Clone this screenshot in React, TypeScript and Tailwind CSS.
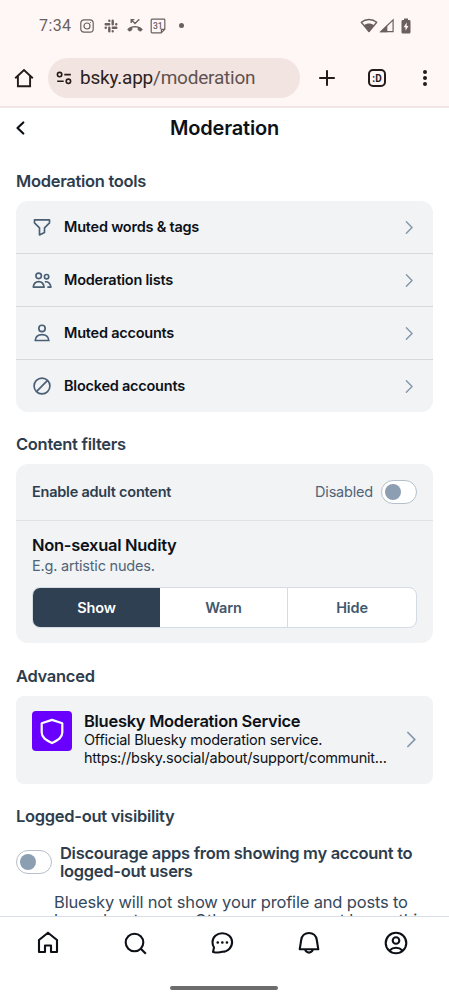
import type { ReactNode } from 'react'

const ink = { fill: 'none', stroke: 'currentColor' }

function Chevron({ size }: { size: number }) {
  return (
    <svg width={size} height={size} viewBox="0 0 24 24" fill="#8597a9">
      <path d="M8.293 3.293a1 1 0 0 1 1.414 0l8 8a1 1 0 0 1 0 1.414l-8 8a1 1 0 0 1-1.414-1.414L15.586 12 8.293 4.707a1 1 0 0 1 0-1.414Z" />
    </svg>
  )
}

function StatusBar() {
  return (
    <div className="flex h-[57px] shrink-0 items-start pl-[39px] pr-[38px] pt-[15px] text-[#6b605f]">
      <div className="flex h-[21px] w-full items-center">
        <span className="w-[41px] whitespace-nowrap font-[Roboto] text-[16px] tracking-[0.4px]">7:34</span>
        {/* instagram */}
        <svg width="14" height="14" viewBox="0 0 14 14" {...ink} strokeWidth="1.2">
          <rect x="0.8" y="0.8" width="12.4" height="12.4" rx="3.2" />
          <circle cx="7" cy="7" r="3" />
          <circle cx="10.5" cy="3.6" r="0.5" fill="currentColor" stroke="none" />
        </svg>
        {/* slack */}
        <svg className="ml-[10px]" width="14" height="14" viewBox="0 0 14 14" {...ink} strokeWidth="2.4" strokeLinecap="round">
          <path d="M5.3 1.7v.1M1.7 5.3h3.5M8.7 1.7v3.5M12.3 5.3h-.1M1.7 8.7h.1M5.3 8.8v3.5M12.3 8.7H8.800M8.7 12.3v-.1" />
        </svg>
        {/* missed call */}
        <svg className="ml-[9px]" width="16" height="15" viewBox="0 0 16 15" fill="currentColor">
          <path d="M8 8.1c-2.8 0-5.3 1-7.4 2.8-.4.4-.4.7 0 1.1l1.4 1.3c.3.3.7.3 1 .1.7-.6 1.3-.9 1.9-1.2.3-.2.4-.4.4-.7V9.8c.9-.3 1.8-.4 2.7-.4s1.8.1 2.7.4v1.7c0 .3.1.5.4.7.6.3 1.2.6 1.9 1.2.3.2.7.2 1-.1l1.4-1.3c.4-.4.4-.7 0-1.1C13.3 9.1 10.8 8.1 8 8.1Z" />
          <path d="M4.2 4.900V1.7h3.2M4.4 1.900l3.600 3.600 4.300-4.300" {...ink} strokeWidth="1.3" />
        </svg>
        {/* calendar */}
        <svg className="ml-[7px]" width="16" height="16" viewBox="0 0 16 16" {...ink} strokeWidth="1.2">
          <path d="M2 1.2h12a.8.8 0 0 1 .8.8v9.2L11.2 14.8H2a.8.8 0 0 1-.8-.8V2a.8.8 0 0 1 .8-.8ZM14.6 11.4h-3.2v3.2" />
          <text x="7.8" y="10.8" textAnchor="middle" fill="currentColor" stroke="none" className="font-[Roboto] text-[8.5px] font-medium">31</text>
        </svg>
        <span className="ml-[13px] size-[5px] rounded-full bg-current" />
        <div className="ml-auto flex items-center">
          <svg width="18" height="15" viewBox="0 0 18 15" fill="currentColor">
            <path d="M1.3 4.3C5.6.6 12.4.6 16.7 4.3L9 13.6Z" {...ink} strokeWidth="1.4" strokeLinejoin="round" />
            <path d="M3.9 7.3c3-2.4 7.2-2.4 10.2 0L9 14Z" />
          </svg>
          <svg className="ml-px" width="15" height="15" viewBox="0 0 15 15" fill="currentColor">
            <path d="M1.8 13.7 14.1 1.8v11.9Z" {...ink} strokeWidth="1.2" />
            <path d="M1 14.2 8.3 7v7.2Z" />
          </svg>
          <svg className="ml-[7px]" width="10" height="16" viewBox="0 0 10 16">
            <path d="M3 .5h4v1.6h1.2A1.3 1.3 0 0 1 9.5 3.4v10.8a1.3 1.3 0 0 1-1.3 1.3H1.8a1.3 1.3 0 0 1-1.3-1.3V3.4a1.3 1.3 0 0 1 1.3-1.3H3Z" fill="currentColor" />
            <path d="M5.7 4.6 2.6 9.2h1.9v3.5l3-4.6H5.7Z" fill="#fff7f5" />
          </svg>
        </div>
      </div>
    </div>
  )
}

function BrowserBar() {
  return (
    <div className="flex h-[51px] shrink-0 items-start border-b-2 border-[#f2e6e4] pl-[14px] pt-[1px] text-[#241b1a]">
      <div className="flex h-10 w-full items-center">
        <svg width="20" height="20" viewBox="0 0 20 20" {...ink} strokeWidth="1.9">
          <path d="M1.2 10.3 10 2l8.8 8.3M3.9 8v10.3h12.2V8" />
        </svg>
        <div className="ml-[14px] flex h-10 w-[252px] items-center rounded-full bg-[#f1e4e1] pl-[8px]">
          <svg width="16" height="14" viewBox="0 0 16 14" {...ink} strokeWidth="1.6">
            <circle cx="3.6" cy="3.6" r="2.2" />
            <path d="M8.3 3.6h6.5M1.2 10.3h6.5" />
            <circle cx="12.4" cy="10.3" r="2.2" />
          </svg>
          <span className="ml-2 whitespace-nowrap font-[Roboto] text-[19px] tracking-[-0.22px] text-[#2b2120]">
            bsky.app<span className="text-[#5f5250]">/moderation</span>
          </span>
        </div>
        <svg className="ml-[18px]" width="18" height="18" viewBox="0 0 18 18" {...ink} strokeWidth="2">
          <path d="M9 1.2v15.6M1.2 9h15.6" />
        </svg>
        <div className="ml-[32px] flex size-[18px] items-center justify-center rounded-[5px] border-2 border-current font-[Roboto] text-[10px] font-bold">
          :D
        </div>
        <div className="ml-[37px] flex flex-col gap-[2px]">
          <span className="size-1 rounded-full bg-current" />
          <span className="size-1 rounded-full bg-current" />
          <span className="size-1 rounded-full bg-current" />
        </div>
      </div>
    </div>
  )
}

const tools: { label: string; icon: ReactNode }[] = [
  {
    label: 'Muted words & tags',
    icon: <path d="M3 3.5h18v3.6L15 13v5.5L9 21.5V13L3 7.1Z" />,
  },
  {
    label: 'Moderation lists',
    icon: (
      <>
        <circle cx="8" cy="7" r="3.3" />
        <circle cx="17.5" cy="8" r="2.6" />
        <path d="M1.500 20.500c.5-4 3-6.500 6.500-6.500s6 2.500 6.500 6.500ZM15.5 14.200c4-.7 6.500 1.600 7.200 6.300h-4.300" />
      </>
    ),
  },
  {
    label: 'Muted accounts',
    icon: (
      <>
        <circle cx="12" cy="6.5" r="3.8" />
        <path d="M3.8 21c.5-4.5 3.8-7 8.2-7s7.7 2.5 8.2 7Z" />
      </>
    ),
  },
  {
    label: 'Blocked accounts',
    icon: (
      <>
        <circle cx="12" cy="12" r="9.5" />
        <path d="M5.3 18.7 18.7 5.3" />
      </>
    ),
  },
]

function SectionTitle({ children }: { children: ReactNode }) {
  return <h2 className="text-[16.5px] font-semibold leading-5 tracking-[-0.29px] text-[#2e3d4d]">{children}</h2>
}

function Toggle() {
  return (
    <span className="flex h-6 w-9 shrink-0 items-center rounded-full border border-[#b5c0cb] bg-white pl-[3px]">
      <span className="size-4 rounded-full bg-[#8c9eb2]" />
    </span>
  )
}

function ToolList() {
  return (
    <div className="mt-[10px] divide-y divide-[#d4d9de] overflow-hidden rounded-xl bg-[#f1f3f5]">
      {tools.map(({ label, icon }) => (
        <div key={label} className="flex h-[53px] items-center px-4 last:h-[52px]">
          <svg className="text-[#4a5f75]" width="20" height="20" viewBox="0 0 24 24" {...ink} strokeWidth="2" strokeLinejoin="round">
            {icon}
          </svg>
          <span className="ml-3 flex-1 text-[14.5px] font-semibold tracking-[-0.23px] text-[#0d1117]">{label}</span>
          <Chevron size={17} />
        </div>
      ))}
    </div>
  )
}

function ContentFilters() {
  return (
    <div className="mt-[10px] h-[179px] rounded-xl bg-[#f1f3f5]">
      <div className="flex h-[57px] items-center border-b border-[#dde2e7] px-4">
        <span className="flex-1 text-[14.5px] font-semibold tracking-[-0.23px] text-[#2e3d4d]">Enable adult content</span>
        <span className="mr-2 text-[14.5px] tracking-[-0.2px] text-[#506478]">Disabled</span>
        <Toggle />
      </div>
      <div className="px-4 pt-[13px]">
        <p className="text-[16.5px] font-semibold leading-[22px] tracking-[-0.29px] text-[#0d1117]">Non-sexual Nudity</p>
        <p className="text-[14.5px] leading-5 tracking-[-0.2px] text-[#506478]">E.g. artistic nudes.</p>
        <div className="mt-[11px] grid h-[41px] grid-cols-[127px_128px_1fr] overflow-hidden rounded-lg border border-[#d4dbe2] bg-white text-[14.5px] font-semibold tracking-[-0.15px] text-[#42576c]">
          <span className="flex items-center justify-center bg-[#2e4052] text-white">Show</span>
          <span className="flex items-center justify-center border-r border-[#d4dbe2]">Warn</span>
          <span className="flex items-center justify-center">Hide</span>
        </div>
      </div>
    </div>
  )
}

function ModerationService() {
  return (
    <div className="mt-[10px] flex h-[88px] rounded-lg bg-[#f1f3f5] px-4 pt-[15px] text-[#0d1117]">
      <div className="flex size-10 items-center justify-center rounded bg-[#6900ff]">
        <svg width="26" height="28" viewBox="0 0 26 28" {...ink} stroke="white" strokeWidth="2.2" strokeLinejoin="round">
          <path d="M13 2.9 23.3 6.3v9.2c0 4.8-3.8 7.3-10.3 10.6C6.5 22.8 2.7 20.3 2.7 15.5V6.3Z" />
        </svg>
      </div>
      <div className="ml-3 min-w-0 flex-1 whitespace-nowrap">
        <p className="text-[16.5px] font-semibold leading-5 tracking-[-0.29px]">Bluesky Moderation Service</p>
        <p className="text-[14.5px] leading-[18px] tracking-[-0.23px]">Official Bluesky moderation service.</p>
        <p className="text-[14.5px] leading-[18px] tracking-[-0.23px]">https://bsky.social/about/support/communit...</p>
      </div>
      <div className="-mr-1 flex h-[57px] items-center">
        <Chevron size={21} />
      </div>
    </div>
  )
}

const tabs: ReactNode[] = [
  <path d="M3 9 12 1.7 21 9v12h-6v-6.5H9V21H3Z" />,
  <>
    <circle cx="11.5" cy="11.5" r="8.8" />
    <path d="m17.8 17.8 5 5" />
  </>,
  <>
    <path d="M12.3 2.2c5.5 0 9.8 3.9 9.8 9.1s-4.300 9.5-9.8 9.5c-1.400.5-5.500 1-9.300.2l1-4.500c-1-1.500-1.500-3.100-1.500-5.200 0-5.200 4.300-9.100 9.800-9.100Z" />
    <path d="M7.7 11.5h.1M12.3 11.5h.1M16.9 11.5h.1" strokeWidth="2.6" strokeLinecap="round" />
  </>,
  <path d="M2.7 18.3 4.2 9C4.8 4.7 8 2 12 2s7.2 2.7 7.8 7l1.5 9.3ZM8 18.5c.8 2.1 2.1 3.1 4 3.1s3.2-1 4-3.1" />,
  <>
    <circle cx="12" cy="12" r="10.3" />
    <circle cx="12" cy="9.5" r="3.3" />
    <path d="M5.5 19.5c3.7-3.6 9.3-3.6 13 0" />
  </>,
]

function BottomNav() {
  return (
    <nav className="h-[84px] shrink-0 border-t border-[#d9dfe4] bg-white pl-[4px] pr-[10px] pt-[14px]">
      <div className="grid grid-cols-5 text-[#0d1117]">
        {tabs.map((icon, i) => (
          <span key={i} className="flex justify-center">
            <svg width="24" height="24" viewBox="0 0 24 24" {...ink} strokeWidth="2.1" strokeLinejoin="round">
              {icon}
            </svg>
          </span>
        ))}
      </div>
      <div className="ml-[166px] mt-[31px] h-1 w-[108px] rounded-full bg-[#6c6c6c]" />
    </nav>
  )
}

export default function App() {
  return (
    <div className="flex h-[1000px] w-[449px] flex-col overflow-hidden bg-white font-[Inter,sans-serif]">
      <div className="flex shrink-0 flex-col bg-[#fff7f5]">
        <StatusBar />
        <BrowserBar />
      </div>

      <header className="grid h-10 shrink-0 grid-cols-[24px_1fr_24px] items-center px-2">
        <svg className="ml-[6px] text-[#0d1117]" width="12" height="16" viewBox="0 0 12 16" {...ink} strokeWidth="2.2" strokeLinecap="round" strokeLinejoin="round">
          <path d="M9.3 2.5 3.5 8l5.8 5.5" />
        </svg>
        <h1 className="text-center text-[20px] font-semibold tracking-[-0.2px] text-[#0d1117]">Moderation</h1>
      </header>

      <main className="min-h-0 flex-1 overflow-hidden px-4 pt-[23px]">
        <SectionTitle>Moderation tools</SectionTitle>
        <ToolList />

        <div className="h-[22px]" />
        <SectionTitle>Content filters</SectionTitle>
        <ContentFilters />

        <div className="h-[23px]" />
        <SectionTitle>Advanced</SectionTitle>
        <ModerationService />

        <div className="h-[22px]" />
        <SectionTitle>Logged-out visibility</SectionTitle>
        <div className="mt-[18px] flex items-center gap-2">
          <Toggle />
          <p className="whitespace-nowrap text-[16.5px] font-semibold leading-[18px] tracking-[-0.3px] text-[#2e3d4d]">
            Discourage apps from showing my account to
            <br />
            logged-out users
          </p>
        </div>
        <p className="ml-[38px] mt-[13px] whitespace-nowrap text-[16.5px] leading-[18px] tracking-[-0.17px] text-[#36495c]">
          Bluesky will not show your profile and posts to
          <br />
          logged-out users. Other apps may not honor this
        </p>
      </main>

      <BottomNav />
    </div>
  )
}
